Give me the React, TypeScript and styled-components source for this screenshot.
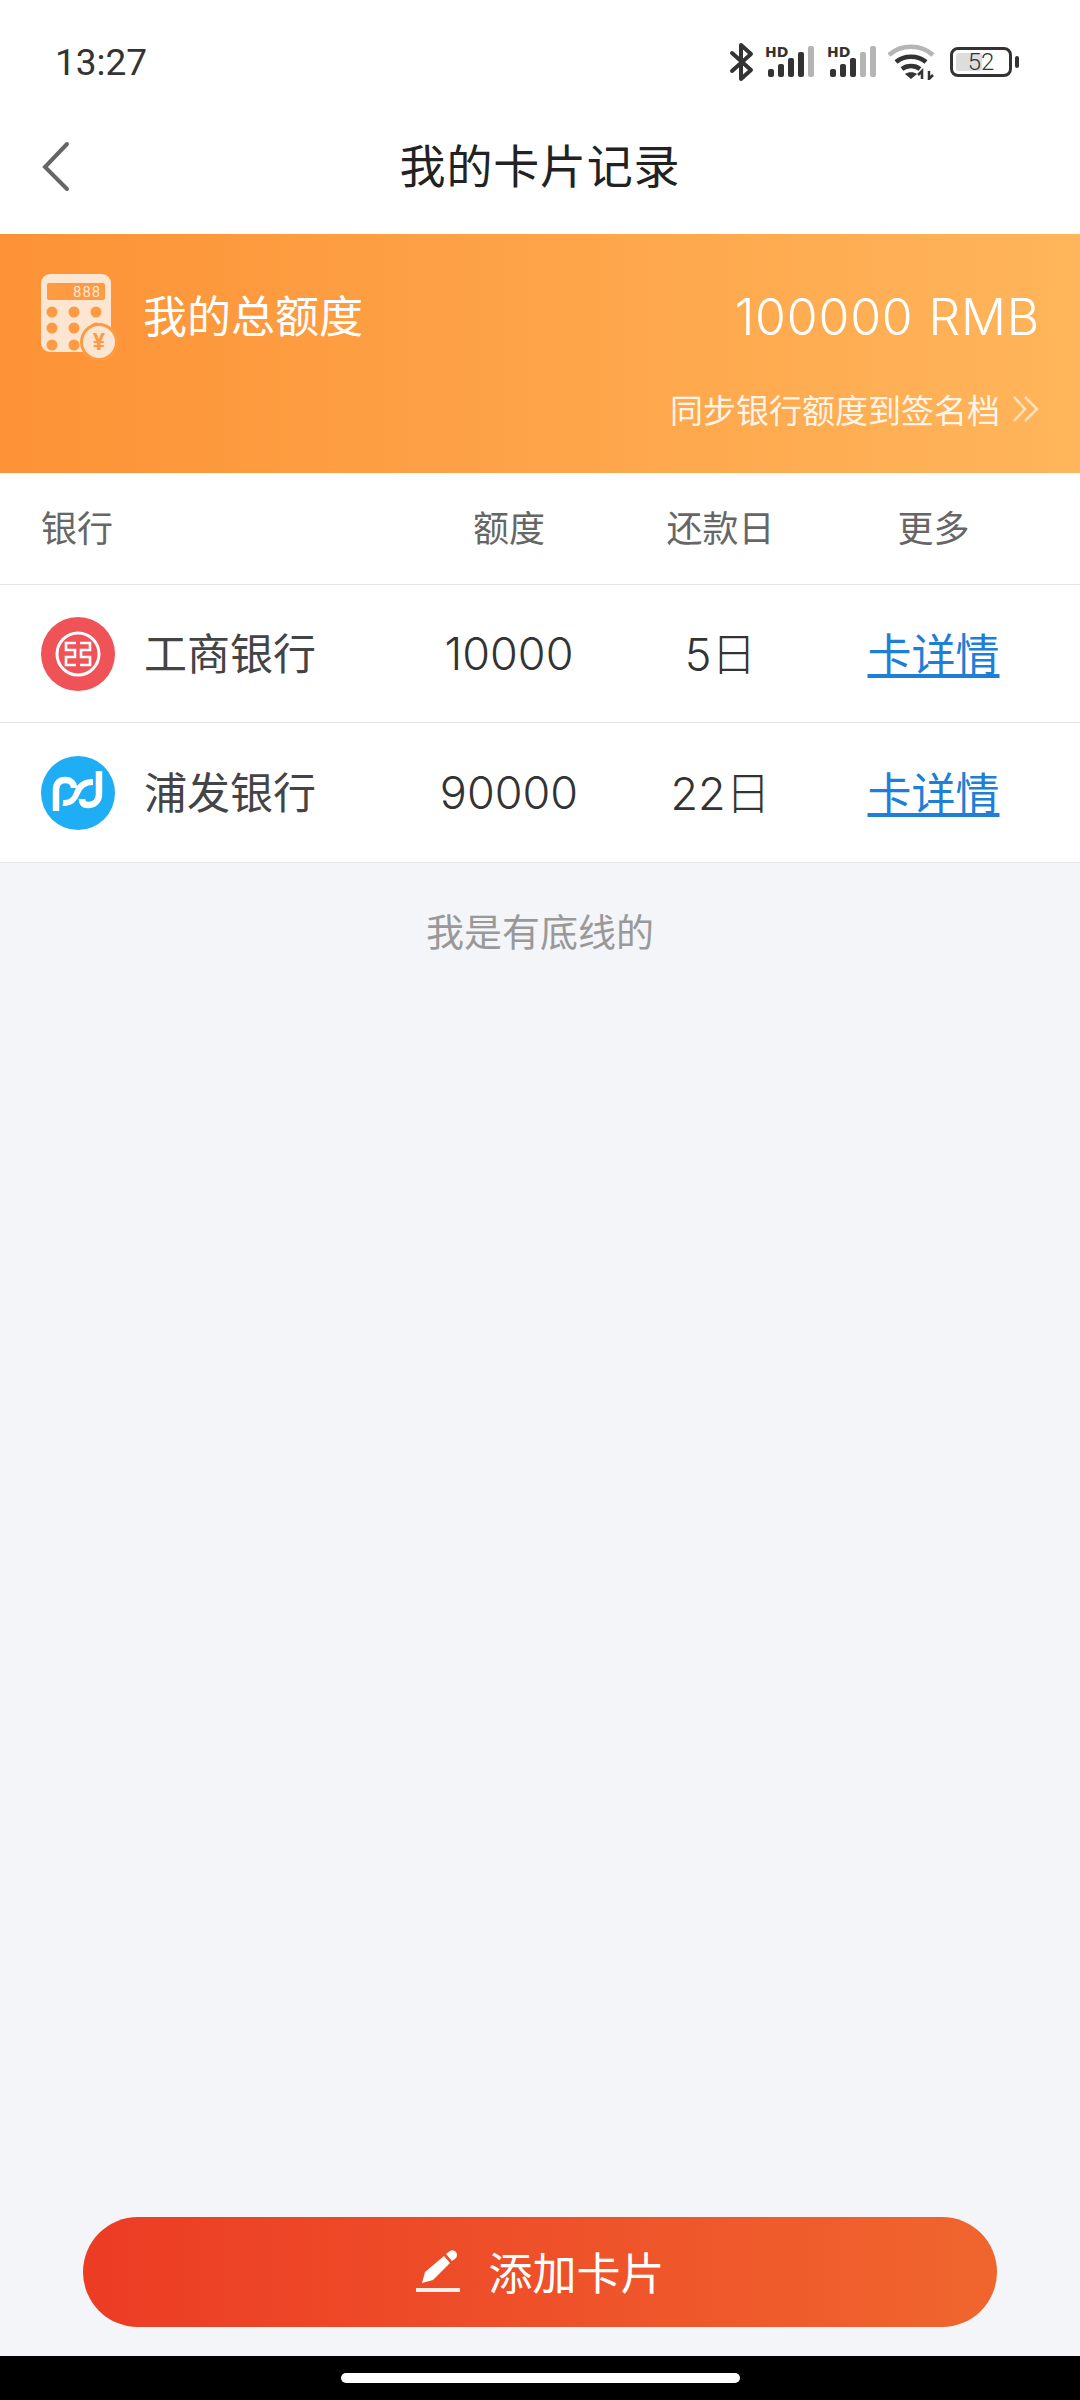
import React from 'react';
import styled, { createGlobalStyle } from 'styled-components';

const GlobalStyle = createGlobalStyle`
  html, body {
    margin: 0;
    padding: 0;
    background: #f4f5f8;
  }
  * {
    box-sizing: border-box;
  }
`;

const FONT = `"Noto Sans CJK SC", "Noto Sans", sans-serif`;

const Page = styled.div`
  width: 1080px;
  height: 2400px;
  display: flex;
  flex-direction: column;
  background: #f4f5f8;
  font-family: ${FONT};
`;

const StatusBar = styled.div`
  height: 124px;
  background: #fff;
  display: flex;
  align-items: center;
  justify-content: space-between;
  padding: 0 59px 0 55px;
`;

const Time = styled.span`
  font-family: Roboto, sans-serif;
  font-size: 37px;
  font-weight: 400;
  color: #333;
`;

const StatusIcons = styled.div`
  display: flex;
  align-items: center;
  gap: 10px;
`;

const NavBar = styled.div`
  height: 110px;
  background: #fff;
  display: flex;
  align-items: center;
  justify-content: center;
  position: relative;
`;

const BackButton = styled.svg`
  position: absolute;
  left: 40px;
  top: 16px;
`;

const NavTitle = styled.h1`
  margin: 0 0 32px;
  font-size: 46px;
  font-weight: 400;
  color: #222;
  line-height: 1;
  letter-spacing: 0.8px;
`;

const Banner = styled.div`
  height: 239px;
  padding: 40px 40px 0 41px;
  color: #fff;
  background: linear-gradient(90deg, #fd9236, #ffb55b);
`;

const BannerTop = styled.div`
  display: flex;
  align-items: flex-start;
  justify-content: space-between;
`;

const BannerLabel = styled.div`
  display: flex;
  align-items: flex-start;
  gap: 25px;
  font-size: 44px;
  line-height: 80px;
`;

const Amount = styled.div`
  margin-top: 3px;
  font-family: Inter, "Noto Sans", sans-serif;
  font-size: 50px;
  font-weight: 300;
  line-height: 80px;
  letter-spacing: 0.8px;
`;

const SyncRow = styled.div`
  display: flex;
  justify-content: flex-end;
  align-items: center;
  gap: 12px;
  margin-top: 24px;
  font-size: 33px;
  line-height: 48px;
  color: rgba(255, 255, 255, 0.88);
`;

const TableRow = styled.div<{ $height: number }>`
  height: ${(p) => p.$height}px;
  display: grid;
  grid-template-columns: 362px 212px 211px 215px;
  align-items: center;
  background: #fff;
  border-bottom: 1px solid #e6e6e6;
  padding-left: 41px;

  &:last-of-type {
    border-bottom: none;
  }
`;

const HeadCell = styled.div<{ $left?: boolean }>`
  font-size: 36px;
  line-height: 1.3;
  padding-bottom: 5px;
  color: #666;
  text-align: ${(p) => (p.$left ? 'left' : 'center')};
`;

const BankCell = styled.div`
  display: flex;
  align-items: center;
  gap: 29px;
  font-size: 43px;
  color: #444;
`;

const BankName = styled.span`
  padding-bottom: 5px;
`;

const ValueCell = styled.div<{ $lift?: number }>`
  padding-bottom: ${(p) => p.$lift ?? 0}px;
  font-family: Inter, "Noto Sans CJK SC", sans-serif;
  font-size: 45px;
  font-weight: 300;
  color: #333;
  text-align: center;
`;

const DetailLink = styled.a`
  font-size: 44px;
  color: #1f7fd6;
  text-decoration: underline;
  text-align: center;
  padding-bottom: 4px;
`;

const Bottomline = styled.div`
  height: 136px;
  padding-bottom: 4px;
  display: flex;
  align-items: center;
  justify-content: center;
  font-size: 38px;
  color: #999;
`;

const Spacer = styled.div`
  flex: 1;
`;

const AddButton = styled.button`
  height: 110px;
  margin: 0 83px 29px;
  padding: 0 0 3px;
  border: none;
  border-radius: 55px;
  display: flex;
  align-items: center;
  justify-content: center;
  gap: 27px;
  color: #fff;
  font-family: ${FONT};
  font-size: 44px;
  background: linear-gradient(90deg, #ec3c24, #f0652e);
`;

const NavArea = styled.div`
  height: 44px;
  background: #000;
  display: flex;
  justify-content: center;
  padding-top: 17px;
`;

const HomeIndicator = styled.div`
  width: 399px;
  height: 10px;
  border-radius: 5px;
  background: #fff;
`;

const Signal = ({ active }: { active: number }) => (
  <svg width="52" height="44" viewBox="0 0 52 44">
    <text x="1" y="17" fontFamily="'DejaVu Sans', sans-serif" fontWeight="700" fontSize="14" fill="#333">
      HD
    </text>
    {[8, 13, 19, 25, 31].map((h, i) => (
      <rect key={h} x={4 + i * 10} y={37 - h} width="6" height={h} rx="2" fill={i < active ? '#333' : '#b5b5b5'} />
    ))}
  </svg>
);

const Bluetooth = () => (
  <svg width="25" height="40" viewBox="0 0 25 40" fill="none" stroke="#333" strokeWidth="4" strokeLinejoin="round" strokeLinecap="round">
    <path d="M3 11 L22 28 L12 37 V3 L22 12 L3 29" />
  </svg>
);

const Wifi = () => (
  <svg width="52" height="36" viewBox="0 0 52 36" fill="none" strokeLinecap="butt">
    <path d="M1 11 C13 0 33 0 45 11" stroke="#b5b5b5" strokeWidth="4.5" />
    <path d="M8 18 C16 11 30 11 38 18" stroke="#333" strokeWidth="4.5" />
    <path d="M14 25 C19 21 27 21 32 25" stroke="#333" strokeWidth="4.5" />
    <path d="M23 35 L17 30 C20 27.5 26 27.5 29 30 Z" fill="#333" />
    <path d="M34 35 V27 L30 31 M41 27 V35 L45 31" stroke="#333" strokeWidth="2.5" />
  </svg>
);

const BatteryShell = styled.div`
  width: 62px;
  height: 30px;
  border: 3px solid #333;
  border-radius: 8px;
  position: relative;
  display: flex;
  align-items: center;
  justify-content: center;
  font-family: Roboto, sans-serif;
  font-size: 24px;
  font-weight: 300;
  color: #333;
  margin-right: 9px;

  &::after {
    content: '';
    position: absolute;
    right: -10px;
    top: 6px;
    width: 4px;
    height: 12px;
    border-radius: 2px;
    background: #333;
  }
`;

const BatteryFill = styled.div`
  position: absolute;
  left: 3px;
  top: 3px;
  bottom: 3px;
  border-radius: 3px;
  background: #ddd;
`;

const BatteryValue = styled.span`
  position: relative;
  line-height: 1;
`;

const Battery = ({ level }: { level: number }) => (
  <BatteryShell>
    <BatteryFill style={{ width: `${level * 0.5}px` }} />
    <BatteryValue>{level}</BatteryValue>
  </BatteryShell>
);

const CalculatorIcon = () => (
  <svg width="77" height="87" viewBox="0 0 77 87">
    <rect x="0" y="0" width="70" height="78" rx="9" fill="#fce6d2" />
    <rect x="6" y="9" width="58" height="17" rx="2" fill="#fd9a42" />
    <text x="32" y="23" fontFamily="Roboto, sans-serif" fontSize="15" fill="#fce6d2" letterSpacing="1">
      888
    </text>
    {[11, 33, 55].map((cx) =>
      [38, 54, 71].map((cy) => <circle key={`${cx}-${cy}`} cx={cx} cy={cy} r="5.5" fill="#fd9a42" />),
    )}
    <circle cx="58" cy="68" r="19" fill="#fd9a42" />
    <circle cx="58" cy="68" r="16" fill="#fce6d2" />
    <text x="58" y="76" textAnchor="middle" fontFamily="Roboto, sans-serif" fontWeight="700" fontSize="23" fill="#fd9a42">
      ¥
    </text>
  </svg>
);

const IcbcLogo = () => (
  <svg width="74" height="74" viewBox="-37 -37 74 74">
    <circle r="37" fill="#ef5358" />
    <circle r="21" fill="none" stroke="#fff" strokeWidth="3" />
    <g fill="none" stroke="#fff" strokeWidth="2.6">
      <path d="M-2 -11 H-12 V-4 H-3 V3 H-12 V11 H-2" />
      <path d="M2 -11 H12 V-4 H3 V3 H12 V11 H2" />
    </g>
  </svg>
);

const SpdbLogo = () => (
  <svg width="74" height="74" viewBox="0 0 74 74">
    <circle cx="37" cy="37" r="37" fill="#1fadf5" />
    <g fill="none" stroke="#fff" strokeWidth="6.5">
      <path d="M15 55 V34 C15 27 19 24 24 24 C30 24 33 28 33 32" />
      <path d="M22 47 C31 48 34 42 36 37 C38 31 42 26 52 26" strokeWidth="6" />
      <path d="M58 15 V38 C58 45 53 49 47 49 C43 49 41 47 41 43" />
    </g>
  </svg>
);

const PencilIcon = () => (
  <svg width="46" height="42" viewBox="0 0 46 42">
    <path d="M6 33 L9 22 L28 6 L34 13 L17 30 Z" fill="#fff" />
    <path d="M30 4 L34 1 Q37 -1 40 2 Q42 5 40 8 L36 11 Z" fill="#fff" />
    <rect x="0" y="38" width="44" height="4" fill="#fff" opacity="0.9" />
  </svg>
);

const banks = [
  { name: '工商银行', logo: <IcbcLogo />, limit: '10000', day: '5日', height: 138 },
  { name: '浦发银行', logo: <SpdbLogo />, limit: '90000', day: '22日', height: 140 },
];

const App = () => (
  <Page>
    <GlobalStyle />
    <StatusBar>
      <Time>13:27</Time>
      <StatusIcons>
        <Bluetooth />
        <Signal active={4} />
        <Signal active={3} />
        <Wifi />
        <Battery level={52} />
      </StatusIcons>
    </StatusBar>
    <NavBar>
      <BackButton width="34" height="56" viewBox="0 0 34 56" fill="none" stroke="#666" strokeWidth="4" strokeLinecap="round">
        <path d="M27 4 L5 27 L27 49" />
      </BackButton>
      <NavTitle>我的卡片记录</NavTitle>
    </NavBar>
    <Banner>
      <BannerTop>
        <BannerLabel>
          <CalculatorIcon />
          我的总额度
        </BannerLabel>
        <Amount>100000 RMB</Amount>
      </BannerTop>
      <SyncRow>
        同步银行额度到签名档
        <svg width="28" height="28" viewBox="0 0 28 28" fill="none" stroke="#fff" strokeOpacity="0.6" strokeWidth="2.5">
          <path d="M2 2 L13 14 L2 26 M13 2 L25 14 L13 26" />
        </svg>
      </SyncRow>
    </Banner>
    <TableRow $height={112}>
      <HeadCell $left>银行</HeadCell>
      <HeadCell>额度</HeadCell>
      <HeadCell>还款日</HeadCell>
      <HeadCell>更多</HeadCell>
    </TableRow>
    {banks.map((bank) => (
      <TableRow key={bank.name} $height={bank.height}>
        <BankCell>
          {bank.logo}
          <BankName>{bank.name}</BankName>
        </BankCell>
        <ValueCell>{bank.limit}</ValueCell>
        <ValueCell $lift={5}>{bank.day}</ValueCell>
        <DetailLink>卡详情</DetailLink>
      </TableRow>
    ))}
    <Bottomline>我是有底线的</Bottomline>
    <Spacer />
    <AddButton>
      <PencilIcon />
      添加卡片
    </AddButton>
    <NavArea>
      <HomeIndicator />
    </NavArea>
  </Page>
);

export default App;
